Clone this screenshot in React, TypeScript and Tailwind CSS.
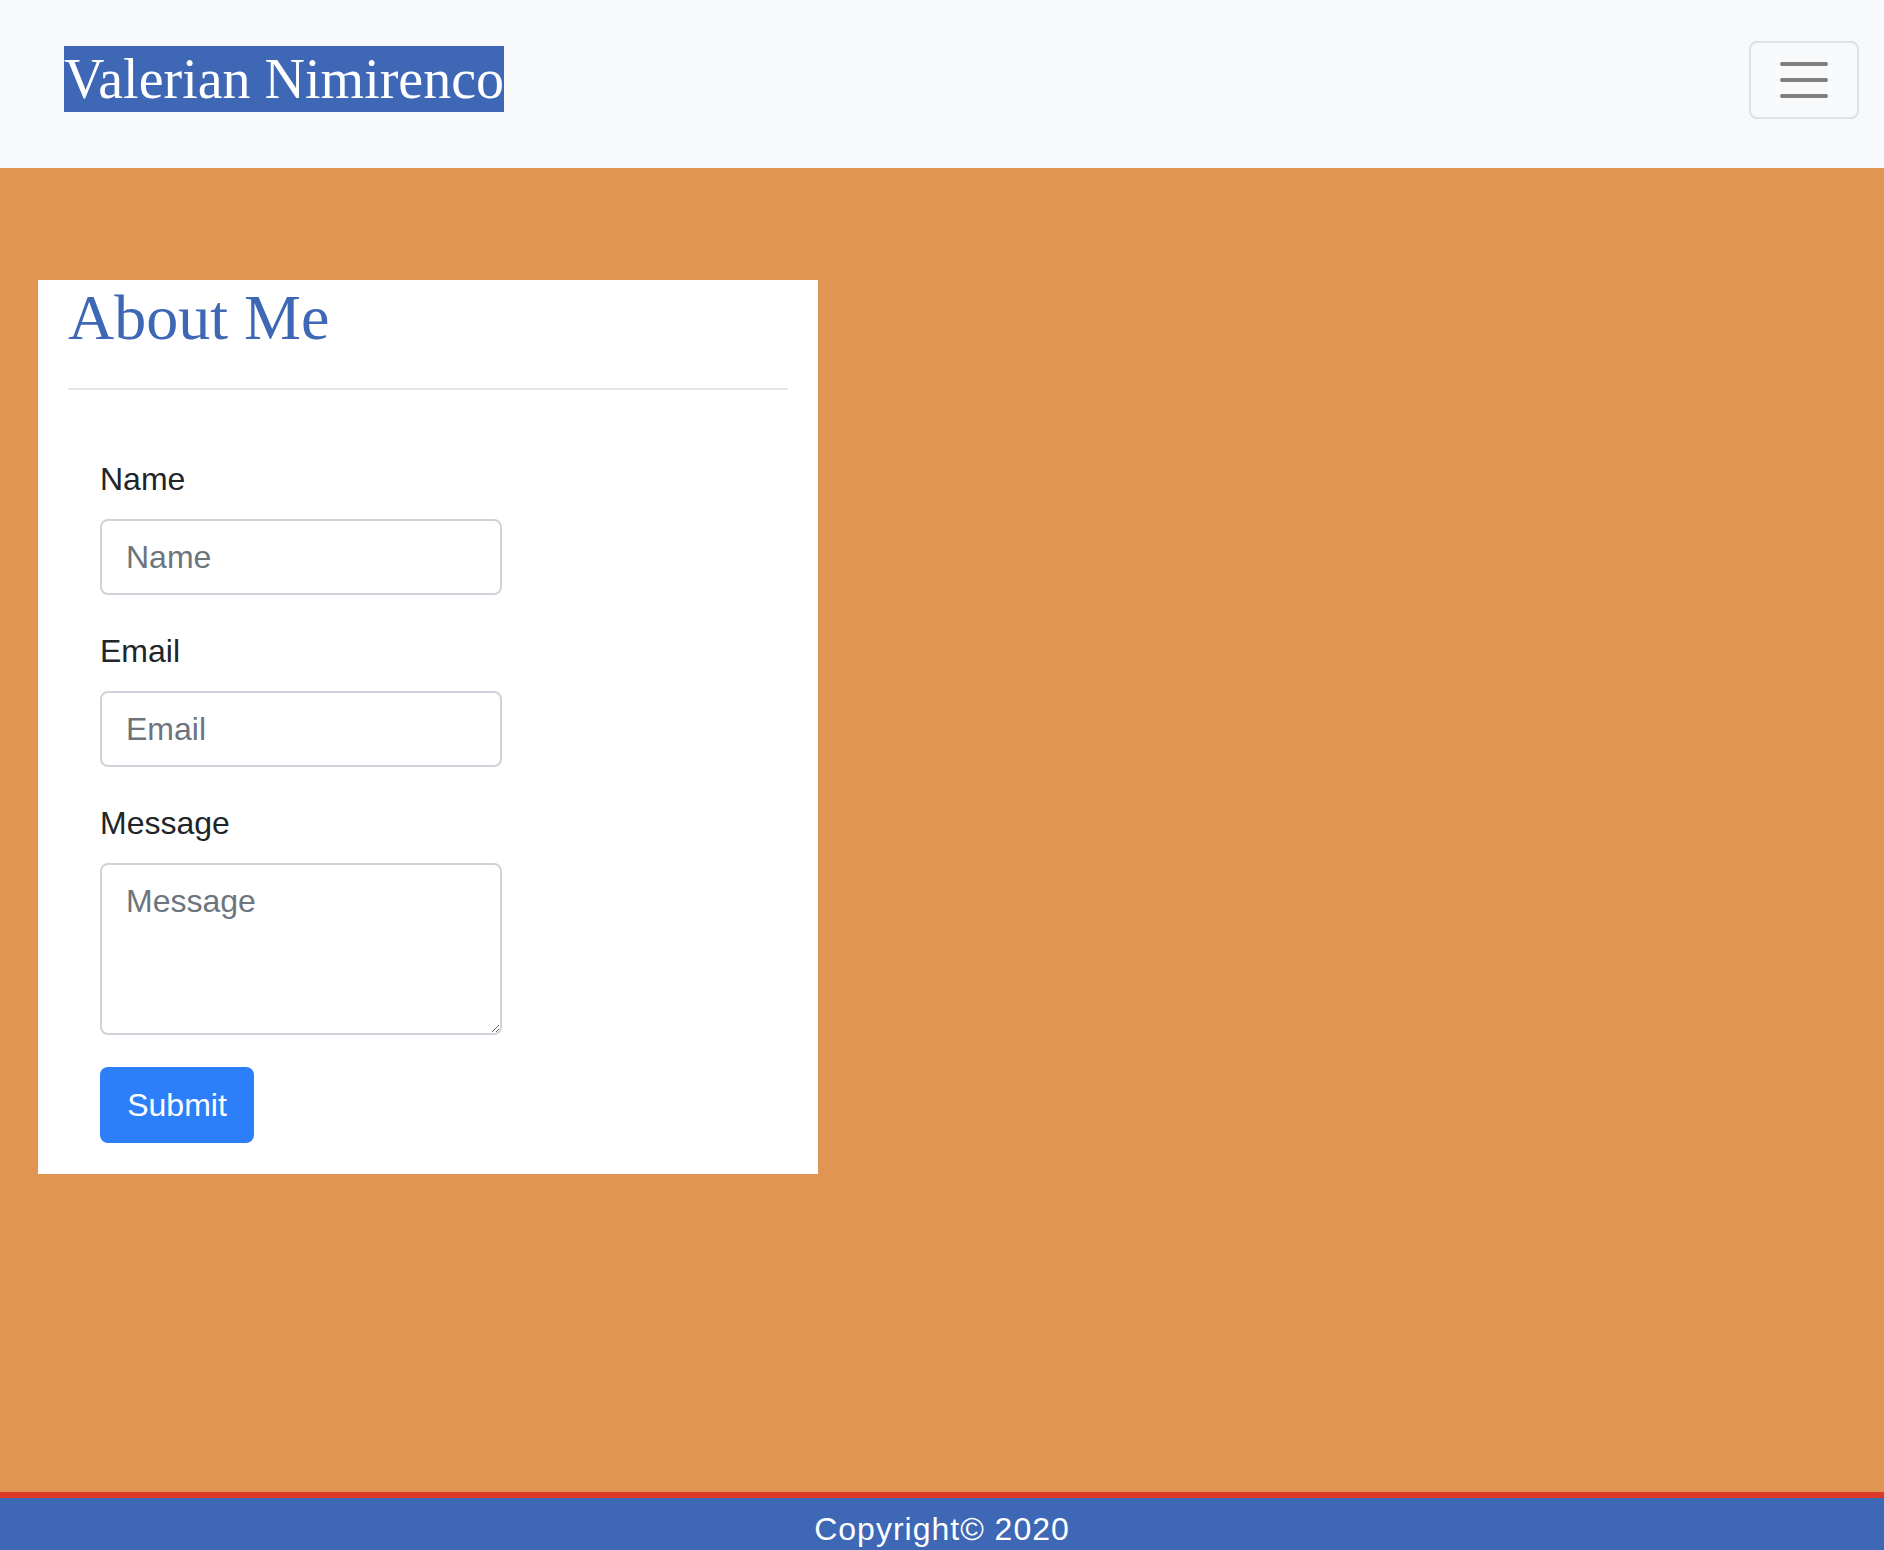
import React from 'react';

const sans = "font-['Liberation_Sans',Arial,sans-serif]";
const serif = "font-['Liberation_Serif','Times_New_Roman',serif]";

const Field: React.FC<{ label: string; textarea?: boolean }> = ({ label, textarea }) => (
  <div className="mb-[32px] flex flex-col">
    <label className="mb-[16px] text-[32px] leading-[48px] text-[#212529]">{label}</label>
    {textarea ? (
      <textarea
        rows={3}
        placeholder={label}
        className="h-[172px] w-[402px] rounded-[8px] border-2 border-[#ced4da] bg-white px-[24px] py-[12px] text-[32px] leading-[48px] text-[#495057] placeholder:text-[#6c757d] outline-none"
      />
    ) : (
      <input
        type="text"
        placeholder={label}
        className="h-[76px] w-[402px] rounded-[8px] border-2 border-[#ced4da] bg-white px-[24px] py-[12px] text-[32px] leading-[48px] text-[#495057] placeholder:text-[#6c757d] outline-none"
      />
    )}
  </div>
);

export default function App() {
  return (
    <div className={`min-h-screen bg-[#e09553] ${sans}`}>
      <nav className="flex h-[168px] items-start justify-between bg-[#f8f9fa] pl-[64px] pr-[25px] pt-[41px]">
        <a className={`mt-[5px] inline-block bg-[#3e67b5] text-[56px] leading-[66px] text-white ${serif}`}>
          Valerian Nimirenco
        </a>
        <button className="flex h-[78px] w-[110px] items-center justify-center rounded-[8px] border-2 border-[#dfe0e1]">
          <svg width="60" height="60" viewBox="0 0 30 30">
            <path d="M4 7h22M4 15h22M4 23h22" stroke="#7f7f80" strokeWidth="2" strokeLinecap="round" />
          </svg>
        </button>
      </nav>

      <main className="h-[1324px] pl-[38px] pt-[112px]">
        <div className="w-[780px] bg-white px-[30px] pb-[31px] pt-[6px]">
          <h2 className={`text-[64px] leading-[64px] text-[#3e67b5] ${serif}`}>About Me</h2>
          <div className="mt-[38px] h-[2px] bg-[#e6e6e6]" />
          <form className="mt-[65px] pl-[32px]">
            <Field label="Name" />
            <Field label="Email" />
            <Field label="Message" textarea />
            <button
              type="button"
              className="h-[76px] w-[154px] rounded-[8px] bg-[#2d7ff9] text-[32px] leading-[48px] text-white"
            >
              Submit
            </button>
          </form>
        </div>
      </main>

      <footer className="border-t-[6px] border-[#dc3a26] bg-[#3e67b5] pb-[16px] pt-[7px] text-center text-[32px] leading-[48px] tracking-[1px] text-white">
        Copyright© 2020
      </footer>
    </div>
  );
}
